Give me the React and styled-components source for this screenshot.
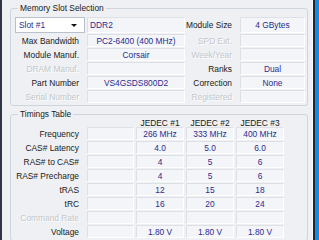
import styled, { createGlobalStyle } from "styled-components";

const Global = createGlobalStyle`
  html, body {
    margin: 0;
    padding: 0;
    background: #eef0f3;
  }
  body {
    font-family: "Liberation Sans", Arial, sans-serif;
    font-size: 8.4px;
  }
`;

const Frame = styled.div`
  width: 319px;
  height: 240px;
  display: flex;
  overflow: hidden;
`;

const Edge = styled.div`
  width: ${(p) => p.w}px;
  flex: none;
  background: ${(p) => p.color};
`;

const Page = styled.div`
  flex: 1;
  background: #eef0f3;
  padding: 3px 4px 0 8px;
  display: flex;
  flex-direction: column;
  gap: 3px;
`;

const Group = styled.fieldset`
  margin: 0;
  border: 1px solid #cfd5dc;
  border-radius: 3px;
  padding: ${(p) => p.pad};
  min-width: 0;
`;

const Legend = styled.legend`
  padding: 0 2px;
  margin-left: 3px;
  line-height: 10px;
  color: #1a1a1a;
`;

const SlotGrid = styled.div`
  display: grid;
  grid-template-columns: 70px 98px 51px 65px;
  grid-template-rows: 16px repeat(5, 13px);
  column-gap: 2px;
  row-gap: 1px;
`;

const TimingGrid = styled.div`
  display: grid;
  grid-template-columns: 70px 47px 48px 48px 48px;
  grid-template-rows: 7px repeat(8, 13px);
  column-gap: 2px;
  row-gap: 1px;
`;

const Label = styled.div`
  display: flex;
  align-items: center;
  justify-content: flex-end;
  padding-right: 6px;
  white-space: nowrap;
  color: ${(p) => (p.off ? "#c3c7cc" : "#1a1a1a")};
  text-shadow: ${(p) => (p.off ? "1px 1px 0 #ffffff" : "none")};
`;

const Field = styled.div`
  display: flex;
  align-items: center;
  justify-content: ${(p) => (p.left ? "flex-start" : "center")};
  padding-left: ${(p) => (p.left ? "2px" : "0")};
  background: #f4f5f8;
  border-top: 1px solid #dde1e6;
  border-left: 1px solid #dde1e6;
  border-bottom: 1px solid #ffffff;
  border-right: 1px solid #ffffff;
  color: #2c2c8e;
  white-space: nowrap;
  overflow: hidden;
`;

const Head = styled.div`
  display: flex;
  align-items: center;
  justify-content: center;
  color: #1a1a1a;
  white-space: nowrap;
`;

const Combo = styled.div`
  display: flex;
  align-items: center;
  justify-content: space-between;
  background: #ffffff;
  border: 1px solid #b9c1cc;
  padding: 0 7px 0 3px;
  color: #2c2c8e;
`;

const Arrow = styled.span`
  width: 0;
  height: 0;
  border-left: 3px solid transparent;
  border-right: 3px solid transparent;
  border-top: 3px solid #111111;
`;

const Blank = styled.div``;

const timings = [
  ["Frequency", ["266 MHz", "333 MHz", "400 MHz"]],
  ["CAS# Latency", ["4.0", "5.0", "6.0"]],
  ["RAS# to CAS#", ["4", "5", "6"]],
  ["RAS# Precharge", ["4", "5", "6"]],
  ["tRAS", ["12", "15", "18"]],
  ["tRC", ["16", "20", "24"]],
  ["Command Rate", ["", "", ""], true],
  ["Voltage", ["1.80 V", "1.80 V", "1.80 V"]],
];

const App = () => {
  return (
    <Frame>
      <Global />
      <Edge w={2} color="#2e3646" />
      <Page>
        <Group pad="4px 1px 2px 4px">
          <Legend>Memory Slot Selection</Legend>
          <SlotGrid>
            <Combo>
              Slot #1
              <Arrow />
            </Combo>
            <Field left>DDR2</Field>
            <Label>Module Size</Label>
            <Field>4 GBytes</Field>

            <Label>Max Bandwidth</Label>
            <Field>PC2-6400 (400 MHz)</Field>
            <Label off>SPD Ext.</Label>
            <Field />

            <Label>Module Manuf.</Label>
            <Field>Corsair</Field>
            <Label off>Week/Year</Label>
            <Field />

            <Label off>DRAM Manuf.</Label>
            <Field />
            <Label>Ranks</Label>
            <Field>Dual</Field>

            <Label>Part Number</Label>
            <Field>VS4GSDS800D2</Field>
            <Label>Correction</Label>
            <Field>None</Field>

            <Label off>Serial Number</Label>
            <Field />
            <Label off>Registered</Label>
            <Field />
          </SlotGrid>
        </Group>

        <Group pad="0 1px 2px 4px">
          <Legend>Timings Table</Legend>
          <TimingGrid>
            <Blank />
            <Blank />
            <Head>JEDEC #1</Head>
            <Head>JEDEC #2</Head>
            <Head>JEDEC #3</Head>
            {timings.map(([name, vals, off]) => [
              <Label key={name} off={off}>
                {name}
              </Label>,
              <Field key={name + "-x"} />,
              ...vals.map((v, i) => <Field key={name + i}>{v}</Field>),
            ])}
          </TimingGrid>
        </Group>
      </Page>
      <Edge w={1} color="#fbfcfd" />
      <Edge w={2} color="#1f2633" />
      <Edge w={4} color="#1689e0" />
    </Frame>
  );
};

export default App;
